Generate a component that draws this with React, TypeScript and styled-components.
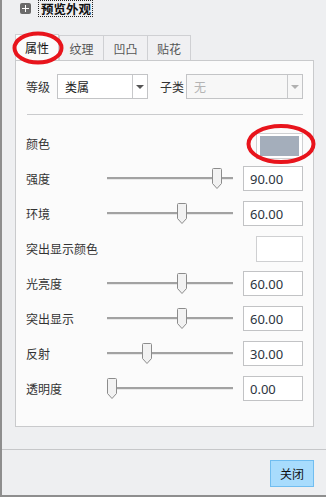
import styled, { createGlobalStyle } from "styled-components";

const GlobalStyle = createGlobalStyle`
  html, body {
    margin: 0;
    padding: 0;
    background: #eeeff1;
  }
  * {
    box-sizing: border-box;
  }
`;

const FONT = `"Noto Sans CJK SC", "Liberation Sans", sans-serif`;

const Window = styled.div`
  position: relative;
  width: 326px;
  height: 497px;
  overflow: hidden;
  background: #eeeff1;
  border-left: 2px solid #8e8e8e;
  border-bottom: 2px solid #8e8e8e;
  font-family: ${FONT};
  font-size: 12px;
  color: #222;
  display: flex;
  flex-direction: column;
`;

const Header = styled.div`
  display: flex;
  align-items: center;
  gap: 7px;
  margin-top: -1px;
  padding-left: 18px;
  height: 18px;
`;

const PlusIcon = styled.span`
  width: 11px;
  height: 11px;
  border-radius: 2px;
  background: #6a6a6a;
  position: relative;
  &::before,
  &::after {
    content: "";
    position: absolute;
    background: #fff;
  }
  &::before {
    left: 2px;
    right: 2px;
    top: 5px;
    height: 1px;
  }
  &::after {
    top: 2px;
    bottom: 2px;
    left: 5px;
    width: 1px;
  }
`;

const HeaderTitle = styled.span`
  border: 1px dotted #222;
  padding: 0 1px 0 2px;
  line-height: 15px;
  font-weight: 600;
  font-size: 12.5px;
  color: #111;
`;

const TabBar = styled.div`
  display: flex;
  margin: 18px 0 0 13px;
  height: 25px;
  position: relative;
  z-index: 1;
`;

const Tab = styled.div<{ $active?: boolean }>`
  width: 44px;
  height: ${(p) => (p.$active ? "26px" : "25px")};
  margin-top: ${(p) => (p.$active ? "-1px" : "0")};
  display: flex;
  align-items: center;
  justify-content: center;
  border: 1px solid #cfd0d3;
  border-right: ${(p) => (p.$active ? "1px solid #cfd0d3" : "none")};
  border-bottom: none;
  background: ${(p) => (p.$active ? "#fbfbfb" : "#f0f0f2")};
  color: ${(p) => (p.$active ? "#111" : "#555")};
  &:last-child {
    border-right: 1px solid #cfd0d3;
  }
`;

const Panel = styled.div`
  margin: 0 12px 0 13px;
  height: 367px;
  background: #fbfbfb;
  border: 1px solid #c9cacc;
  padding: 13px 10px 0 10px;
  display: flex;
  flex-direction: column;
`;

const ComboRow = styled.div`
  display: flex;
  align-items: center;
  height: 25px;
`;

const ComboLabel = styled.span<{ $w: number; $gap?: number }>`
  width: ${(p) => p.$w}px;
  margin-left: ${(p) => p.$gap ?? 0}px;
  white-space: nowrap;
  color: #333;
`;

const Combo = styled.div<{ $w: number; $disabled?: boolean }>`
  width: ${(p) => p.$w}px;
  height: 25px;
  border: 1px solid #c3c4c6;
  background: ${(p) => (p.$disabled ? "#f7f7f7" : "#fff")};
  display: flex;
  align-items: center;
  color: ${(p) => (p.$disabled ? "#b4b4b4" : "#222")};
`;

const ComboText = styled.span`
  flex: 1;
  padding-left: 7px;
`;

const ComboArrow = styled.span<{ $disabled?: boolean }>`
  width: 15px;
  height: 100%;
  border-left: 1px solid #c8c9cb;
  display: flex;
  align-items: center;
  justify-content: center;
  &::after {
    content: "";
    border-left: 4px solid transparent;
    border-right: 4px solid transparent;
    border-top: 4px solid ${(p) => (p.$disabled ? "#b0b0b0" : "#555")};
  }
`;

const Separator = styled.div`
  height: 1px;
  background: #cacbcd;
  margin: 15px 0 11px 1px;
  width: 276px;
`;

const PropRow = styled.div`
  display: grid;
  grid-template-columns: 81px 136px 60px;
  align-items: center;
  height: 35px;
`;

const PropLabel = styled.span`
  color: #333;
  white-space: nowrap;
`;

const SliderBox = styled.div`
  position: relative;
  height: 21px;
  margin-right: 10px;
  display: flex;
  align-items: center;
`;

const Track = styled.div`
  width: 100%;
  height: 3px;
  background: #a2a2a2;
  border-bottom: 1px solid #e8e8e8;
`;

const Thumb = styled.svg`
  position: absolute;
  top: 0;
`;

const NumberBox = styled.div`
  height: 25px;
  border: 1px solid #c2c3c5;
  background: #fff;
  display: flex;
  align-items: center;
  padding-left: 6px;
  font-size: 13px;
  color: #2c3440;
  font-family: "Noto Sans", "Liberation Sans", sans-serif;
`;

const Swatch = styled.div<{ $color: string; $top: number }>`
  grid-column: 3;
  justify-self: end;
  width: 47px;
  height: 26px;
  margin-top: ${(p) => p.$top}px;
  border: 1px solid #cfd0d2;
  padding: 2px 3px;
  background: #fff;
  &::after {
    content: "";
    display: block;
    width: 100%;
    height: 100%;
    background: ${(p) => p.$color};
  }
`;

const Footer = styled.div`
  margin-top: 22px;
  border-top: 1px solid #c6c7c9;
  display: flex;
  justify-content: flex-end;
  padding: 10px 12px 0 0;
`;

const CloseButton = styled.div`
  width: 44px;
  height: 27px;
  background: #a8dcfd;
  border: 1px solid #70bdf0;
  display: flex;
  align-items: center;
  justify-content: center;
  color: #111;
`;

const Ring = styled.svg`
  position: absolute;
  pointer-events: none;
  z-index: 5;
`;

type Prop =
  | { kind: "swatch"; label: string; color: string; top: number }
  | { kind: "slider"; label: string; value: number };

const props: Prop[] = [
  { kind: "swatch", label: "颜色", color: "#a4aebb", top: 4 },
  { kind: "slider", label: "强度", value: 90 },
  { kind: "slider", label: "环境", value: 60 },
  { kind: "swatch", label: "突出显示颜色", color: "#ffffff", top: 0 },
  { kind: "slider", label: "光亮度", value: 60 },
  { kind: "slider", label: "突出显示", value: 60 },
  { kind: "slider", label: "反射", value: 30 },
  { kind: "slider", label: "透明度", value: 0 },
];

const Slider = ({ value }: { value: number }) => (
  <SliderBox>
    <Track />
    <Thumb
      width="10"
      height="21"
      viewBox="0 0 10 21"
      style={{ left: `${value * 1.167}px` }}
    >
      <path
        d="M0.5 1.5 Q0.5 0.5 1.5 0.5 H8.5 Q9.5 0.5 9.5 1.5 V15.5 L5 20.5 L0.5 15.5 Z"
        fill="#f2f2f2"
        stroke="#8c8c8c"
      />
    </Thumb>
  </SliderBox>
);

export default function App() {
  return (
    <>
      <GlobalStyle />
      <Window>
        <Header>
          <PlusIcon />
          <HeaderTitle>预览外观</HeaderTitle>
        </Header>
        <TabBar>
          <Tab $active>属性</Tab>
          <Tab>纹理</Tab>
          <Tab>凹凸</Tab>
          <Tab>贴花</Tab>
        </TabBar>
        <Panel>
          <ComboRow>
            <ComboLabel $w={31}>等级</ComboLabel>
            <Combo $w={91}>
              <ComboText>类属</ComboText>
              <ComboArrow />
            </Combo>
            <ComboLabel $w={26} $gap={12}>
              子类
            </ComboLabel>
            <Combo $w={117} $disabled>
              <ComboText>无</ComboText>
              <ComboArrow $disabled />
            </Combo>
          </ComboRow>
          <Separator />
          {props.map((p) => (
            <PropRow key={p.label}>
              <PropLabel>{p.label}</PropLabel>
              {p.kind === "slider" ? (
                <>
                  <Slider value={p.value} />
                  <NumberBox>{p.value.toFixed(2)}</NumberBox>
                </>
              ) : (
                <Swatch $color={p.color} $top={p.top} />
              )}
            </PropRow>
          ))}
        </Panel>
        <Footer>
          <CloseButton>关闭</CloseButton>
        </Footer>
        <Ring width="52" height="34" style={{ left: 10, top: 31 }}>
          <ellipse cx="26" cy="17" rx="23.5" ry="14.5" fill="none" stroke="#e8141c" strokeWidth="4" />
        </Ring>
        <Ring width="70" height="42" style={{ left: 244, top: 123 }}>
          <ellipse cx="35" cy="21" rx="32.5" ry="18" fill="none" stroke="#e8141c" strokeWidth="4" />
        </Ring>
      </Window>
    </>
  );
}
